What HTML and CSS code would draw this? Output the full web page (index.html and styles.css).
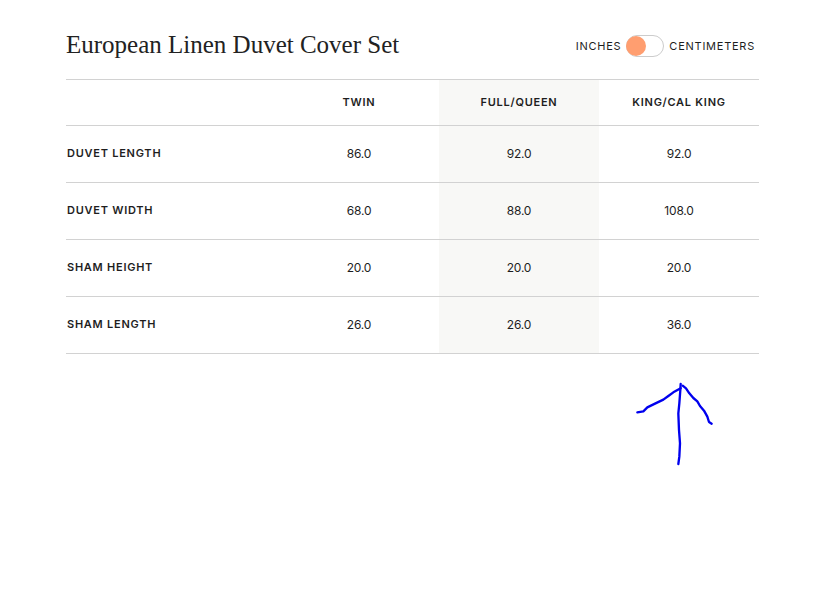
FILE: index.html
```html
<!DOCTYPE html>
<html lang="en">
<head>
<meta charset="utf-8">
<title>European Linen Duvet Cover Set</title>
<link rel="stylesheet" href="styles.css">
</head>
<body>
<main class="page">
  <header class="head">
    <h1 class="title">European Linen Duvet Cover Set</h1>
    <div class="units">
      <span>INCHES</span>
      <span class="switch"><span class="knob"></span></span>
      <span>CENTIMETERS</span>
    </div>
  </header>
  <table class="sizes">
    <thead>
      <tr><th></th><th>TWIN</th><th class="hl">FULL/QUEEN</th><th>KING/CAL KING</th></tr>
    </thead>
    <tbody>
      <tr><th>DUVET LENGTH</th><td>86.0</td><td class="hl">92.0</td><td>92.0</td></tr>
      <tr><th>DUVET WIDTH</th><td>68.0</td><td class="hl">88.0</td><td>108.0</td></tr>
      <tr><th>SHAM HEIGHT</th><td>20.0</td><td class="hl">20.0</td><td>20.0</td></tr>
      <tr><th>SHAM LENGTH</th><td>26.0</td><td class="hl">26.0</td><td>36.0</td></tr>
    </tbody>
  </table>
</main>
<svg class="arrow" width="110" height="105" viewBox="0 0 330 315" aria-hidden="true">
  <path d="M182 42 L181 60 L178 100 L175 130 L177 180 L180 220 L178 260 L175 282"/>
  <path d="M182 55 L160 67 L145 78 L130 89 L105 101 L82 112 L70 124 L52 127"/>
  <path d="M188 47 L198 55 L208 70 L220 84 L232 94 L240 108 L252 122 L262 140 L267 156 L275 161"/>
</svg>
</body>
</html>
```
FILE: styles.css
```css
html, body { margin: 0; padding: 0; background: #fff; }
body { width: 835px; height: 607px; overflow: hidden; position: relative; color: #1e1e1e; font-family: "Inter", "Liberation Sans", sans-serif; }
.page { padding: 0 76px 0 66px; }
.head { display: flex; justify-content: space-between; align-items: center; height: 79px; }
.title { margin: 10px 0 0; font: 400 25px "Liberation Serif", serif; color: #222; }
.units { display: flex; align-items: center; gap: 5px; font-size: 11px; letter-spacing: 0.75px; margin-right: 4px; margin-top: 12px; }
.switch { width: 36px; height: 20px; border: 1px solid #ccc; border-radius: 11px; position: relative; }
.knob { position: absolute; left: -1px; top: 0; width: 20px; height: 20px; border-radius: 50%; background: #ff9e70; }
.sizes { width: 693px; border-collapse: collapse; table-layout: fixed; border-top: 1px solid #d2d2d2; }
.sizes th, .sizes td { padding: 0 0 2px; text-align: center; font-size: 12px; letter-spacing: -0.2px; border-bottom: 1px solid #d2d2d2; height: 54px; }
.sizes th { font-size: 11px; font-weight: 600; letter-spacing: 0.75px; }
.sizes thead th { height: 43px; }
.sizes th:first-child { width: 213px; text-align: left; padding-left: 1px; box-sizing: border-box; }
.hl { background: #f8f8f6; }
.arrow { position: absolute; left: 620px; top: 370px; }
.arrow path { fill: none; stroke: #0000ee; stroke-width: 7; stroke-linecap: round; stroke-linejoin: round; }
```
